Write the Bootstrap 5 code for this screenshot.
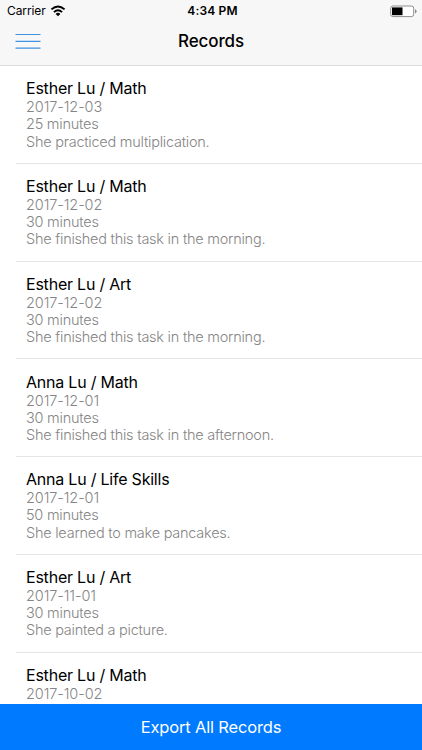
<!DOCTYPE html>
<html lang="en">
<head>
<meta charset="utf-8">
<meta name="viewport" content="width=device-width, initial-scale=1">
<title>Records</title>
<link href="https://cdn.jsdelivr.net/npm/bootstrap@5.3.0/dist/css/bootstrap.min.css" rel="stylesheet">
<style>
body{font-family:Inter,"Liberation Sans",sans-serif;color:#000}
.top-area{height:66px;background:#f7f7f7;border-bottom:1px solid #dcdcdc}
.status{height:22px;padding:0 5px 0 7px;font-size:12px;line-height:22px}
.side{width:80px}
.carrier{letter-spacing:-.1px}
.clock{font-weight:600;font-size:12px;letter-spacing:.15px;padding-left:1px}
.title-bar{height:43px;padding:0 15px}
.title-bar h1{font-size:17px;font-weight:500;line-height:20px;letter-spacing:-.1px;padding-top:9px}
.menu-btn{width:26px;height:16px;margin-top:11px}
.records{padding-left:16px}
.record{height:97.75px;padding:12.4px 0 0 10px;border-bottom:1px solid #e6e6e6}
.record h2{font-size:16px;font-weight:400;line-height:20px;letter-spacing:-.22px}
.record p{font-size:14.5px;font-weight:300;line-height:17.1px;color:#858585;letter-spacing:-.24px}
.record h2 + p{letter-spacing:-.1px}
.export{height:46px;background:#007aff;font-size:16.5px;line-height:20px;letter-spacing:-.17px}
</style>
<script src="https://cdn.jsdelivr.net/npm/bootstrap@5.3.0/dist/js/bootstrap.bundle.min.js"></script>
</head>
<body class="vh-100 d-flex flex-column overflow-hidden bg-white">
<header class="top-area flex-shrink-0">
  <div class="status d-flex justify-content-between">
    <div class="side d-flex align-items-center"><span class="carrier">Carrier</span>
      <svg class="ms-1" width="16" height="12" viewBox="0 0 16 12" aria-hidden="true"><g fill="none" stroke="#000" stroke-width="1.9"><path d="M1.4 4.4Q8-1.5 14.6 4.4"/><path d="M3.9 7.1Q8 3.4 12.1 7.1"/></g><path d="M5.6 8.9Q8 6.8 10.4 8.9L8 11.3Z"/></svg>
    </div>
    <span class="clock">4:34 PM</span>
    <div class="side d-flex justify-content-end align-items-center">
      <svg width="27" height="13" viewBox="0 0 27 13" aria-hidden="true"><rect x=".7" y="1" width="23" height="10.6" rx="2.2" fill="#fff" stroke="#8d8d8d"/><rect x="2" y="2.4" width="10.5" height="7.8" fill="#000"/><path d="M25 4.2Q26.6 4.8 26.6 6.3T25 8.4Z" fill="#8d8d8d"/></svg>
    </div>
  </div>
  <nav class="title-bar d-flex justify-content-between align-items-start">
    <button class="menu-btn btn border-0 rounded-0 p-0 d-flex" aria-label="Menu"><svg width="26" height="16" viewBox="0 0 26 16"><path d="M.5 1.5h25M.5 8.4h25M.5 15.2h25" stroke="#4092e3" stroke-width="1.2"/></svg></button>
    <h1 class="m-0">Records</h1>
    <span class="menu-btn"></span>
  </nav>
</header>
<main class="records flex-grow-1 overflow-hidden">
  <article class="record"><h2 class="m-0">Esther Lu / Math</h2><p class="m-0">2017-12-03</p><p class="m-0">25 minutes</p><p class="m-0">She practiced multiplication.</p></article>
  <article class="record"><h2 class="m-0">Esther Lu / Math</h2><p class="m-0">2017-12-02</p><p class="m-0">30 minutes</p><p class="m-0">She finished this task in the morning.</p></article>
  <article class="record"><h2 class="m-0">Esther Lu / Art</h2><p class="m-0">2017-12-02</p><p class="m-0">30 minutes</p><p class="m-0">She finished this task in the morning.</p></article>
  <article class="record"><h2 class="m-0">Anna Lu / Math</h2><p class="m-0">2017-12-01</p><p class="m-0">30 minutes</p><p class="m-0">She finished this task in the afternoon.</p></article>
  <article class="record"><h2 class="m-0">Anna Lu / Life Skills</h2><p class="m-0">2017-12-01</p><p class="m-0">50 minutes</p><p class="m-0">She learned to make pancakes.</p></article>
  <article class="record"><h2 class="m-0">Esther Lu / Art</h2><p class="m-0">2017-11-01</p><p class="m-0">30 minutes</p><p class="m-0">She painted a picture.</p></article>
  <article class="record"><h2 class="m-0">Esther Lu / Math</h2><p class="m-0">2017-10-02</p></article>
</main>
<button class="export btn flex-shrink-0 w-100 border-0 rounded-0 text-white p-0">Export All Records</button>
</body>
</html>
